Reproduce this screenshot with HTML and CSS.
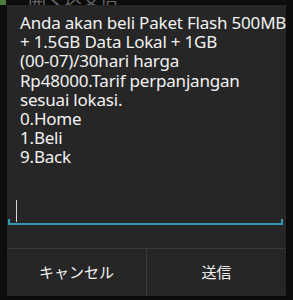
FILE: index.html
```html
<!DOCTYPE html>
<html lang="id">
<head>
  <meta charset="UTF-8">
  <title>USSD</title>
  <link rel="stylesheet" href="styles.css">
</head>
<body>
  <div class="behind">
    <span class="app-icon"></span>
    <span class="app-title">開く送受信</span>
  </div>

  <div class="dialog">
    <p class="message">Anda akan beli Paket Flash 500MB<br>+ 1.5GB Data Lokal + 1GB<br>(00-07)/30hari harga<br>Rp48000.Tarif perpanjangan<br>sesuai lokasi.<br>0.Home<br>1.Beli<br>9.Back</p>

    <div class="field">
      <span class="cursor"></span>
    </div>

    <div class="buttons">
      <button class="btn">キャンセル</button>
      <button class="btn">送信</button>
    </div>
  </div>
</body>
</html>
```

FILE: styles.css
```css
body { margin: 0; width: 293px; height: 300px; overflow: hidden; background: #0d0d0d; font-family: "Noto Sans", "Noto Sans CJK JP", sans-serif; }
.behind { height: 5px; overflow: hidden; display: flex; align-items: flex-end; }
.app-icon { width: 6px; height: 5px; background: #4d7a3a; flex: none; }
.app-title { margin-left: 22px; color: #6a6a6a; font-size: 18px; line-height: 14px; height: 5px; overflow: hidden; display: flex; align-items: flex-end; }
.dialog { margin: 0 7px; height: 291px; background: #262626; display: flex; flex-direction: column; box-shadow: 0 0 2px #000; }
.message { margin: 0; padding: 8px 0 0 13px; color: #f2f2f2; font-size: 17px; letter-spacing: -0.2px; line-height: 19.2px; height: 177px; white-space: nowrap; }
.field { margin: 8px 3px 0 1px; height: 25px; border-bottom: 2px solid #3399b3; position: relative; flex: none; }
.field::before, .field::after { content: ""; position: absolute; bottom: 0; width: 2px; height: 4px; background: #3399b3; }
.field::before { left: 0; }
.field::after { right: 0; }
.cursor { display: block; margin: 2px 0 0 8px; width: 1px; height: 22px; background: #d8d8d8; }
.buttons { margin-top: 23px; flex: 1; display: flex; border-top: 1px solid #3a3a3a; }
.btn { flex: 1; background: none; border: none; color: #f0f0f0; font-family: "Noto Sans CJK JP", sans-serif; font-size: 15px; padding: 0 0 2px; }
.btn + .btn { border-left: 1px solid #3a3a3a; }
```
